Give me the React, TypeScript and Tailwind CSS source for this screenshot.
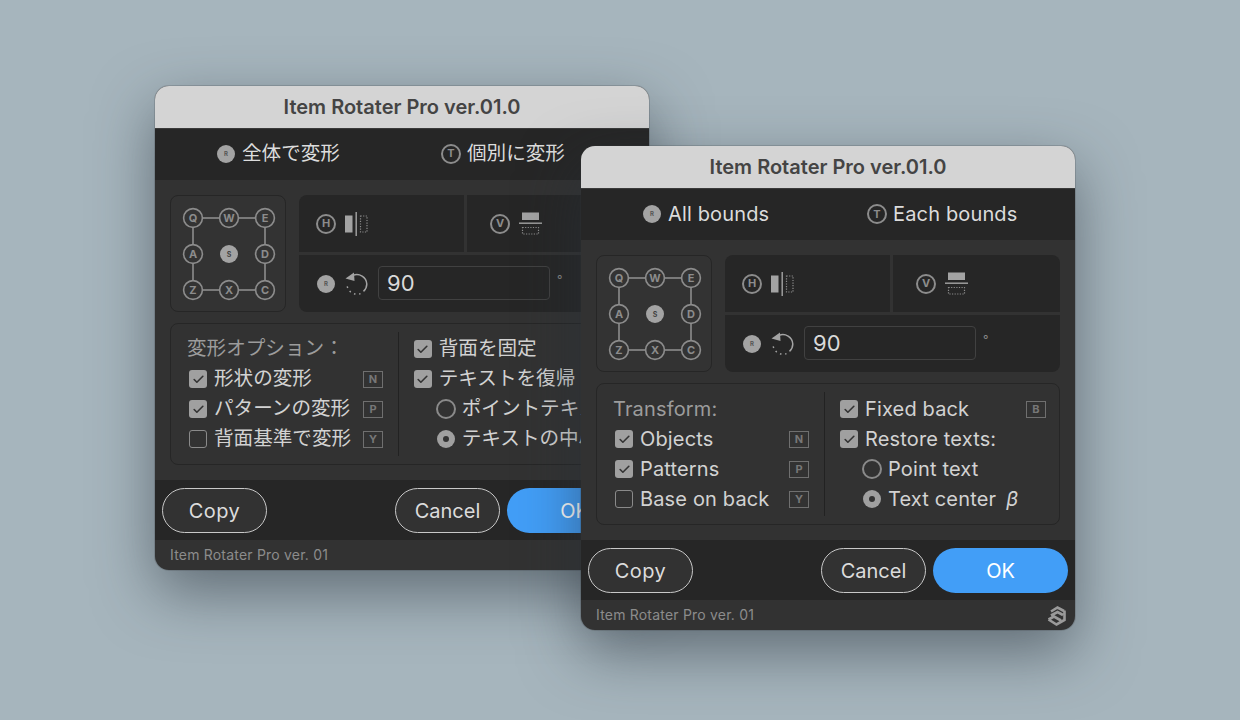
import React from 'react';
import { Check } from 'lucide-react';

const FONT = "font-['Inter','Noto_Sans_CJK_JP',sans-serif]";

const english = {
  textClass: 'text-xl tracking-[0.15px]',
  tabs: ['All bounds', 'Each bounds'],
  heading: 'Transform:',
  left: [['Objects', 'N', true], ['Patterns', 'P', true], ['Base on back', 'Y', false]] as [string, string, boolean][],
  fixedBack: 'Fixed back',
  restore: 'Restore texts:',
  point: 'Point text',
  center: 'Text center',
};

const japanese = {
  textClass: 'text-[19.6px]',
  tabs: ['全体で変形', '個別に変形'],
  heading: '変形オプション：',
  left: [['形状の変形', 'N', true], ['パターンの変形', 'P', true], ['背面基準で変形', 'Y', false]] as [string, string, boolean][],
  fixedBack: '背面を固定',
  restore: 'テキストを復帰',
  point: 'ポイントテキスト',
  center: 'テキストの中心',
};

const KeyBadge = ({ letter }: { letter: string }) => (
  <span className="w-5 h-5 shrink-0 rounded-full border-2 border-[#8c8c8c] flex items-center justify-center text-[11px] leading-none font-bold tracking-normal text-[#8c8c8c]">
    {letter}
  </span>
);

const ActiveBadge = ({ letter }: { letter: string }) => (
  <span className="w-[18px] h-[18px] mx-px shrink-0 rounded-full bg-[#a3a3a3] flex items-center justify-center text-[6px] leading-none font-bold tracking-normal text-[#555555]">
    {letter}
  </span>
);

const KeyMap = () => {
  const nodes = [
    ['Q', 23, 23], ['W', 59, 23], ['E', 95, 23],
    ['A', 23, 59], ['D', 95, 59],
    ['Z', 23, 95], ['X', 59, 95], ['C', 95, 95],
  ] as [string, number, number][];
  return (
    <div className="w-[116px] h-[117px] shrink-0 rounded-lg border border-[#262626] bg-[#333333]">
      <svg width="114" height="115" viewBox="1 1 114 115" className="block">
        <rect x="23" y="23" width="72" height="72" fill="none" stroke="#8c8c8c" strokeWidth="1.6" />
        {nodes.map(([letter, x, y]) => (
          <g key={letter}>
            <circle cx={x} cy={y} r="9.4" fill="#333333" stroke="#8c8c8c" strokeWidth="1.6" />
            <text x={x} y={y + 4} textAnchor="middle" fontSize="11" fontWeight="700" fill="#8c8c8c">{letter}</text>
          </g>
        ))}
        <circle cx="59" cy="59" r="9" fill="#a3a3a3" />
        <text x="59" y="62" textAnchor="middle" fontSize="7" fontWeight="700" fill="#444444">S</text>
      </svg>
    </div>
  );
};

const FlipH = () => (
  <svg width="24" height="24" viewBox="0 0 24 24" className="shrink-0">
    <rect x="0" y="3.5" width="7.5" height="17" fill="#a3a3a3" />
    <rect x="10.5" y="0" width="1.4" height="24" fill="#a3a3a3" />
    <rect x="15.5" y="4" width="6.5" height="16" fill="none" stroke="#8c8c8c" strokeWidth="1.2" strokeDasharray="1.2 1.4" />
  </svg>
);

const FlipV = () => (
  <svg width="24" height="24" viewBox="0 0 24 24" className="shrink-0">
    <rect x="3" y="0.5" width="17" height="7.5" fill="#a3a3a3" />
    <rect x="0" y="10.5" width="23" height="1.4" fill="#a3a3a3" />
    <rect x="3.5" y="15.5" width="16" height="6.5" fill="none" stroke="#8c8c8c" strokeWidth="1.2" strokeDasharray="1.2 1.4" />
  </svg>
);

const RotateLeft = () => (
  <svg width="24" height="24" viewBox="0 0 24 24" className="shrink-0">
    <path d="M8 3.4A10 10 0 0 1 21.8 12 10 10 0 0 1 18.5 19.4" fill="none" stroke="#a3a3a3" strokeWidth="1.5" />
    <path d="M0.5 6.5 9 0.5 9.5 9Z" fill="#a3a3a3" />
    <path d="M15.5 21.6A10 10 0 0 1 2 12.5" fill="none" stroke="#a3a3a3" strokeWidth="1.5" strokeDasharray="1.5 3.6" />
  </svg>
);

const Logo = () => (
  <svg width="20" height="21" viewBox="0 0 20 21" className="shrink-0">
    <path d="M4 6.5 10.5 2.5 17 6 M4 10.5 10.5 7 16 10 M1.5 14.5 7 11.5 14 15.5 M1.5 14.5 9.5 19.5 17.5 15 17.5 5.5" fill="none" stroke="#9a9a9a" strokeWidth="2.6" />
  </svg>
);

const CheckRow = ({ label, shortcut, checked }: { label: string; shortcut?: string; checked: boolean }) => (
  <div className="h-[30px] flex items-center">
    <span className={`w-[18px] h-[18px] ml-px mr-[7px] shrink-0 rounded-[3px] flex items-center justify-center ${checked ? 'bg-[#a0a0a0]' : 'border border-[#8a8a8a]'}`}>
      {checked && <Check size={13} strokeWidth={3} className="text-[#333333]" />}
    </span>
    <span className="leading-none text-[#d2d2d2] whitespace-nowrap">{label}</span>
    {shortcut && (
      <span className="ml-auto w-5 h-[17px] shrink-0 border border-[#6f6f6f] flex items-center justify-center text-[11px] leading-none font-bold tracking-normal text-[#777777]">
        {shortcut}
      </span>
    )}
  </div>
);

const RadioRow = ({ label, selected, beta }: { label: string; selected: boolean; beta?: boolean }) => (
  <div className="h-[30px] flex items-center pl-[23px]">
    {selected ? (
      <span className="w-[18px] h-[18px] ml-px mr-[7px] shrink-0 rounded-full bg-[#a0a0a0] flex items-center justify-center">
        <span className="w-1.5 h-1.5 rounded-full bg-[#333333]" />
      </span>
    ) : (
      <span className="w-5 h-5 mr-[6px] shrink-0 rounded-full border-2 border-[#8a8a8a]" />
    )}
    <span className="leading-none text-[#d2d2d2] whitespace-nowrap">{label}</span>
    {beta && <span className="ml-2.5 leading-none italic text-[#d2d2d2]">β</span>}
  </div>
);

const Dialog = ({ text, className }: { text: typeof english; className: string }) => (
  <div className={`absolute w-[494px] h-[484px] rounded-[14px] overflow-hidden flex flex-col bg-[#323232] shadow-[0_22px_60px_rgba(40,50,58,0.55),0_0_0_1px_rgba(60,60,60,0.2)] ${className}`}>
    <div className="h-[43px] pb-px shrink-0 flex items-center justify-center bg-[#d4d4d4] border-b border-[#3a3a3a] text-xl font-semibold text-[#444444]">
      Item Rotater Pro ver.01.0
    </div>

    {/* Tabs */}
    <div className={`h-[51px] pb-px shrink-0 flex items-center bg-[#262626] text-[#dcdcdc] ${text.textClass}`}>
      <div className="w-[286px] pl-[61px] flex items-center gap-[6px] whitespace-nowrap">
        <ActiveBadge letter="R" />
        {text.tabs[0]}
      </div>
      <div className="flex items-center gap-[6px] whitespace-nowrap">
        <KeyBadge letter="T" />
        {text.tabs[1]}
      </div>
    </div>

    {/* Main */}
    <div className="h-[300px] shrink-0 px-[15px] pt-[15px]">
      <div className="h-[117px] flex gap-[13px]">
        <KeyMap />
        <div className="flex-1 rounded-lg overflow-hidden flex flex-col gap-[3px]">
          <div className="h-[57px] flex gap-[3px]">
            <div className="w-[165px] bg-[#262626] flex items-center pl-[17px] gap-[9px]">
              <KeyBadge letter="H" />
              <FlipH />
            </div>
            <div className="flex-1 bg-[#262626] flex items-center pl-[23px] gap-[9px]">
              <KeyBadge letter="V" />
              <FlipV />
            </div>
          </div>
          <div className="flex-1 bg-[#262626] flex items-center pl-[17px]">
            <ActiveBadge letter="R" />
            <span className="ml-[9px]"><RotateLeft /></span>
            <div className="ml-[9px] -mt-px w-[172px] h-[34px] rounded border border-[#414141] flex items-center pl-2 text-[22px] text-[#dadada]">90</div>
            <span className="ml-[7px] -mt-2 text-xs text-[#888888]">°</span>
          </div>
        </div>
      </div>

      {/* Options */}
      <div className={`mt-[11px] h-[142px] rounded-lg border border-[#262626] flex ${text.textClass}`}>
        <div className="w-[227px] shrink-0 pl-[17px] pr-[15px] pt-[10px]">
          <div className="h-[30px] -ml-px flex items-center leading-none text-[#9c9c9c] whitespace-nowrap">{text.heading}</div>
          {text.left.map(([label, shortcut, checked]) => (
            <CheckRow key={shortcut} label={label} shortcut={shortcut} checked={checked} />
          ))}
        </div>
        <div className="w-px my-2 bg-[#222222]" />
        <div className="flex-1 pl-[14px] pr-[13px] pt-[10px]">
          <CheckRow label={text.fixedBack} shortcut="B" checked />
          <CheckRow label={text.restore} checked />
          <RadioRow label={text.point} selected={false} />
          <RadioRow label={text.center} selected beta />
        </div>
      </div>
    </div>

    {/* Buttons */}
    <div className="h-[60px] shrink-0 flex items-center px-[7px] bg-[#262626] text-xl">
      <button className="w-[105px] h-[45px] pt-px rounded-full border-[1.5px] border-[#c8c8c8] bg-[#323232] text-[#dcdcdc] tracking-[0.4px]">Copy</button>
      <button className="ml-auto w-[105px] h-[45px] pt-px rounded-full border-[1.5px] border-[#c8c8c8] bg-[#323232] text-[#dcdcdc]">Cancel</button>
      <button className="ml-[7px] w-[135px] h-[45px] pt-px rounded-full bg-[#429ef7] text-white">OK</button>
    </div>

    {/* Status */}
    <div className="flex-1 flex items-center justify-between pl-[15px] pr-2 text-sm tracking-[0.2px] text-[#8c8c8c]">
      Item Rotater Pro ver. 01
      <Logo />
    </div>
  </div>
);

const App = () => (
  <div className={`relative w-[1240px] h-[720px] overflow-hidden bg-[#a6b5bd] ${FONT}`}>
    <Dialog text={japanese} className="left-[155px] top-[86px]" />
    <Dialog text={english} className="left-[581px] top-[146px]" />
  </div>
);

export default App;
